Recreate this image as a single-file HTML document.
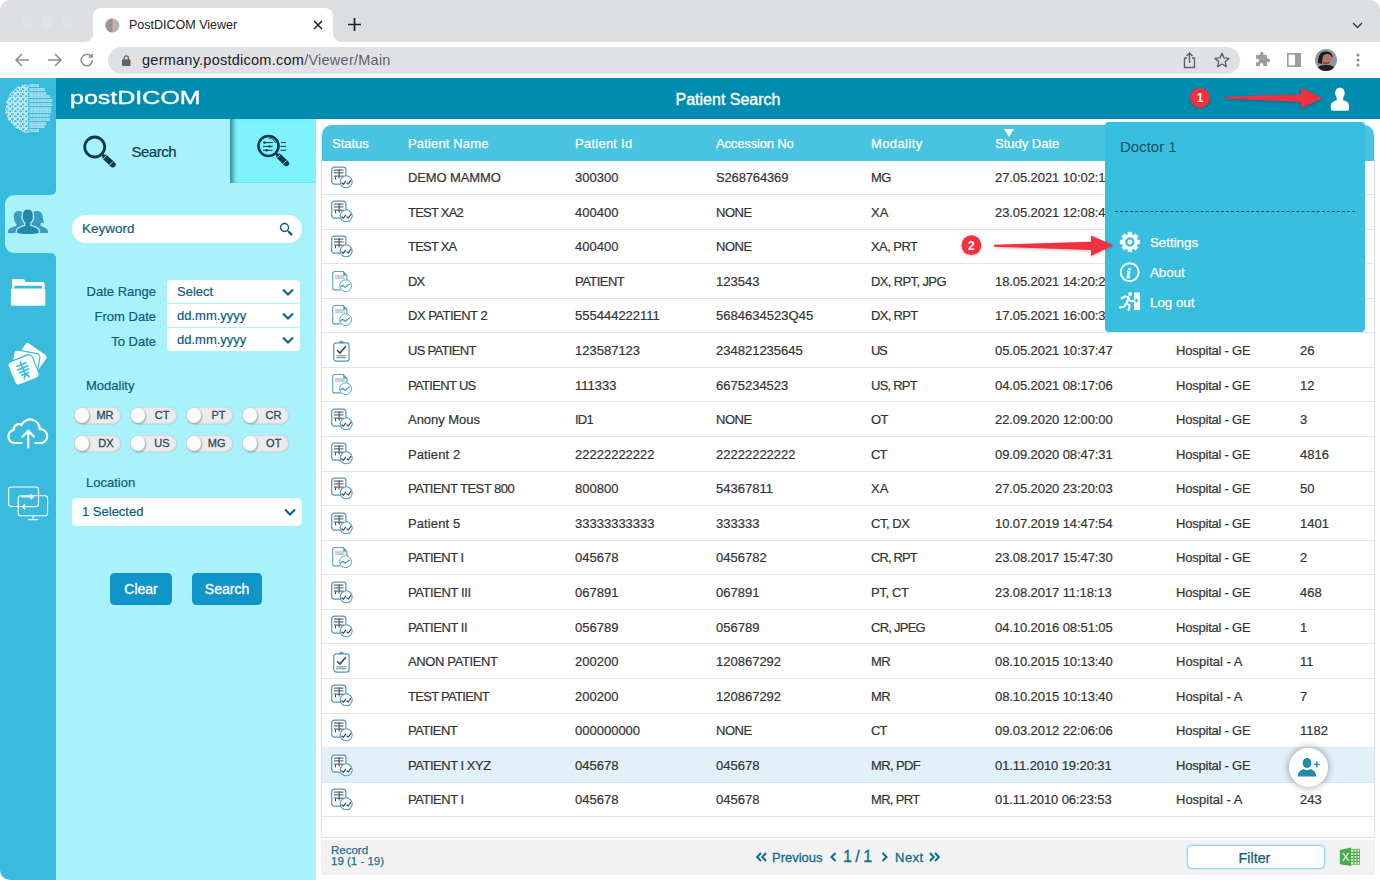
<!DOCTYPE html>
<html lang="en"><head><meta charset="utf-8"><title>PostDICOM Viewer</title>
<style>
*{box-sizing:border-box;margin:0;padding:0}
html,body{width:1380px;height:880px;overflow:hidden;background:#fff;font-family:"Liberation Sans",sans-serif;font-size:13px;color:#333}
.abs{position:absolute}
#win{position:absolute;left:0;top:0;width:1380px;height:880px;border-radius:10px;overflow:hidden;background:#fefefe}
svg{display:block;overflow:visible}
#tabstrip{position:absolute;left:0;top:0;width:1380px;height:42px;background:#dcdee2}
#tab{position:absolute;left:93px;top:8px;width:240px;height:34px;background:#fff;border-radius:8px 8px 0 0}
#tab:before,#tab:after{content:"";position:absolute;bottom:0;width:8px;height:8px}
#tab:before{left:-8px;background:radial-gradient(circle at 0 0,rgba(255,255,255,0) 7.5px,#fff 8px)}
#tab:after{right:-8px;background:radial-gradient(circle at 100% 0,rgba(255,255,255,0) 7.5px,#fff 8px)}
#tab .t{position:absolute;left:36px;top:10px;font-size:12.5px;color:#202124}
#toolbar{position:absolute;left:0;top:42px;width:1380px;height:36px;background:#fff}
#pill{position:absolute;left:108px;top:4.500px;width:1132px;height:27.500px;border-radius:14px;background:#e0e1e4}
#url{position:absolute;left:34px;top:5px;font-size:14.5px;color:#202124;letter-spacing:.25px;white-space:nowrap}
#url i{font-style:normal;color:#5f6368}
#nav{position:absolute;left:0;top:78px;width:56px;height:802px;background:#38bbdc}
#navsel{position:absolute;left:5px;top:195px;width:51px;height:58px;background:#a8f2fc;border-radius:9px 0 0 9px}
#hdr{position:absolute;left:56px;top:78px;width:1324px;height:41px;background:#008cb1}
#brand{position:absolute;left:70px;top:88px;font-size:18px;color:#fff;-webkit-text-stroke:.35px #fff;transform-origin:0 0;transform:scaleX(1.39);white-space:nowrap;line-height:21px}
#title{position:absolute;left:0;top:91px;width:1456px;text-align:center;color:#fff;font-size:16px;-webkit-text-stroke:.35px #fff}
#side{position:absolute;left:56px;top:119px;width:260px;height:761px;background:#a8f2fc}
#adv{position:absolute;left:230px;top:119px;width:86px;height:64px;background:#7ff3fc;box-shadow:inset 6px 0 5px -3px rgba(0,50,80,.6),inset 0 -1px 1px -1px rgba(0,50,80,.3)}
#main{position:absolute;left:316px;top:119px;width:1064px;height:761px;background:#fefefe}
#tbl{position:absolute;left:321px;top:125px;width:1053.500px;height:713px;background:#fff;border:1px solid #dfe3e5;border-radius:10px 10px 0 0;overflow:hidden;box-shadow:0 0 3px rgba(0,0,0,.08)}
#thead{position:absolute;left:322px;top:125px;width:1052px;height:36px;background:#48c3e0;border-radius:10px 10px 0 0;color:#fff;font-size:13px;-webkit-text-stroke:.25px #fff}
#thead span{position:absolute;top:11px;white-space:nowrap}
.row{position:absolute;left:322px;width:1052px;height:34.570px;border-bottom:1px solid #dde6ea;white-space:nowrap}
.row.sel{background:#e1f0f9}
.row span{position:absolute;top:9.700px;line-height:15px;-webkit-text-stroke:.2px #333}
.row .c0{left:8px;top:5.400px}
.ic{width:24px;height:24px;display:block}
.c1{left:86px}.c2{left:253px}.c3{left:394px}.c4{left:549px}.c5{left:673px}.c6{left:854px}.c7{left:978px}
#foot{position:absolute;left:321px;top:840px;width:1053.500px;height:34.600px;background:#f2f2f2}
.lbl{position:absolute;color:#0d5c7d;font-size:13px;white-space:nowrap;-webkit-text-stroke:.2px #0d5c7d}
.sb{position:absolute;background:#fff;color:#0d5c7d;font-size:13px;white-space:nowrap;-webkit-text-stroke:.2px #0d5c7d}
.sb span{position:absolute;left:10px;top:4px}
.sb svg{position:absolute;right:5.800px;top:8px}
.tg{position:absolute;width:46.700px;height:16.500px;border-radius:8.250px;background:#e9ebec;box-shadow:inset 0 0 2px rgba(0,0,0,.28),0 1px 1px rgba(0,0,0,.06);font-size:11px;color:#2f4a5e;-webkit-text-stroke:.3px #2f4a5e;text-align:right;padding-right:7.500px;line-height:17px}
.tg:before{content:"";position:absolute;left:.5px;top:1px;width:14.500px;height:14.500px;border-radius:50%;background:#fafafa;box-shadow:1px 1px 2px rgba(0,0,0,.3)}
.btn{position:absolute;top:573px;height:32px;border-radius:4.500px;background:#1095ca;color:#fff;font-size:14px;text-align:center;line-height:32px;-webkit-text-stroke:.3px #fff}
#dd{position:absolute;left:1105px;top:122px;width:260px;height:210px;background:#38bedf;border-radius:4px}
#dd .it{position:absolute;left:45px;color:#fff;font-size:13.300px;-webkit-text-stroke:.25px #fff}
.pg{position:absolute;color:#0f6a8f;white-space:nowrap;-webkit-text-stroke:.3px #0f6a8f}
.red{fill:#f13040}
</style></head><body>
<svg width="0" height="0" style="position:absolute"><defs>
<symbol id="ica" viewBox="0 0 24 24"><rect x="1.700" y="1.200" width="14.200" height="17" rx="2.600" fill="#fff" stroke="#4f97bf" stroke-width="1.200"/><path d="M3.900 4.100h9.600M3.900 6.900h9.600M3.900 10.100h9.600M9.100 3.200v9.300M5.500 10.500v2.800" stroke="#3a4754" stroke-width="1" fill="none"/><circle cx="16.200" cy="15.800" r="6" fill="#fff" stroke="#4f97bf" stroke-width="1.100"/><path d="M11.500 16.800l2 1.300 2.400-3.200M16.600 16.800l1.700 1.200 2.700-3.900" stroke="#3a4754" stroke-width="1.200" fill="none"/></symbol>
<symbol id="icb" viewBox="0 0 24 24"><path d="M13.200 1.500h-8.500a2 2 0 0 0-2 2v14.400a2 2 0 0 0 2 2h6M13.200 1.500l3.700 3.900v5" fill="#fff" stroke="#5aa3c7" stroke-width="1.100"/><path d="M13.300 1.700l3.500 3.700h-3.500z" fill="#3f9ab5"/><path d="M5.100 6h9.600M5.100 8.100h9.600" stroke="#8a949c" stroke-width=".9" fill="none"/><circle cx="15.600" cy="15.700" r="5.900" fill="#fff" stroke="#5aa3c7" stroke-width="1"/><path d="M10.400 16.900l2.400-1.600 2.250 2 4.750-3.600" stroke="#4f97bf" stroke-width="1.200" fill="none"/></symbol>
<symbol id="icc" viewBox="0 0 24 24"><rect x="3.700" y="3.900" width="15.400" height="18.300" rx="2.600" fill="#fff" stroke="#4f97bf" stroke-width="1.200"/><path d="M9 3.700q2.500-3.300 5 0z" fill="#4f97bf" stroke="#4f97bf" stroke-width=".8"/><path d="M7.100 11.300l2.800 2.800 5.900-6.800" stroke="#3a4754" stroke-width="1.600" fill="none"/><path d="M6.300 16.800h9.900M6.300 18.700h9.900" stroke="#6a747c" stroke-width=".9"/></symbol>
<symbol id="chev" viewBox="0 0 12 8"><path d="M1 1.500l5 5 5-5" fill="none" stroke="#0d5c7d" stroke-width="2"/></symbol>
</defs></svg>
<div id="win">
<!-- ===== browser chrome ===== -->
<div id="tabstrip">
  <div class="abs" style="left:21px;top:15.600px;width:12px;height:12px;border-radius:50%;background:#e1e2e5"></div>
  <div class="abs" style="left:41px;top:15.600px;width:12px;height:12px;border-radius:50%;background:#e1e2e5"></div>
  <div class="abs" style="left:61px;top:15.600px;width:12px;height:12px;border-radius:50%;background:#e1e2e5"></div>
  <div id="tab"><span class="t">PostDICOM Viewer</span>
    <svg class="abs" style="left:12px;top:10px" width="15" height="15" viewBox="0 0 15 15"><circle cx="7.500" cy="7.500" r="7" fill="#b9bcc0"/><path d="M7.500 .5a7 7 0 0 0 0 14z" fill="#8d9297"/><path d="M7.500 1v13M4 3v9M11 3v9M1.500 5h12M1 8h13M2 11h11" stroke="#d98a80" stroke-width=".5" fill="none"/></svg>
    <svg class="abs" style="left:220px;top:12px" width="10" height="10" viewBox="0 0 10 10"><path d="M1 1l8 8M9 1l-8 8" stroke="#202124" stroke-width="1.500"/></svg>
  </div>
  <svg class="abs" style="left:348px;top:18px" width="13" height="13" viewBox="0 0 13 13"><path d="M6.500 0v13M0 6.500h13" stroke="#202124" stroke-width="1.700"/></svg>
  <svg class="abs" style="left:1352.300px;top:22px" width="11" height="7" viewBox="0 0 11 7"><path d="M1 1l4.500 4.500 4.500-4.500" fill="none" stroke="#3c4043" stroke-width="1.500"/></svg>
</div>
<div id="toolbar">
  <svg class="abs" style="left:15px;top:11px" width="15" height="14" viewBox="0 0 15 14"><path d="M14 7h-12.500M7 1l-6 6 6 6" fill="none" stroke="#8a8d91" stroke-width="1.500"/></svg>
  <svg class="abs" style="left:47px;top:11px" width="15" height="14" viewBox="0 0 15 14"><path d="M1 7h12.500M8 1l6 6-6 6" fill="none" stroke="#8a8d91" stroke-width="1.500"/></svg>
  <svg class="abs" style="left:79px;top:10px" width="16" height="16" viewBox="0 0 16 16"><path d="M13.500 8a5.700 5.700 0 1 1-1.700-4" fill="none" stroke="#8a8d91" stroke-width="1.500"/><path d="M13.800 1v4.800h-4.800z" fill="#8a8d91"/></svg>
  <div id="pill">
    <svg class="abs" style="left:14px;top:8.500px" width="8.500" height="11" viewBox="0 0 10 13"><rect x="0" y="5" width="10" height="8" rx="1.200" fill="#5f6368"/><path d="M2.500 5.500v-2a2.500 2.500 0 0 1 5 0v2" fill="none" stroke="#5f6368" stroke-width="1.500"/></svg>
    <span id="url">germany.postdicom.com<i>/Viewer/Main</i></span>
    <svg class="abs" style="left:1075px;top:5px" width="13" height="17" viewBox="0 0 13 17"><path d="M4 6h-2.500v9.500h10v-9.500h-2.500M6.500 11v-9.500M3.500 4l3-3 3 3" fill="none" stroke="#5f6368" stroke-width="1.400"/></svg>
    <svg class="abs" style="left:1106px;top:5px" width="16" height="16" viewBox="0 0 16 16"><path d="M8 1.300l2 4.600 5 .5-3.800 3.300 1.100 4.900-4.300-2.600-4.300 2.600 1.100-4.900-3.800-3.300 5-.5z" fill="none" stroke="#5f6368" stroke-width="1.400" stroke-linejoin="round"/></svg>
  </div>
  <svg class="abs" style="left:1254px;top:10px" width="16" height="16" viewBox="0 0 16 16"><path d="M6 1.500a1.700 1.700 0 0 1 3.400 0v1.500h3.600v3.600h1.300a1.800 1.800 0 0 1 0 3.600h-1.300v3.800h-3.800v-1.300a1.700 1.700 0 0 0-3.400 0v1.300h-3.800v-3.800h1.300a1.700 1.700 0 0 0 0-3.400h-1.300v-3.800h4z" fill="#9a9da2"/></svg>
  <svg class="abs" style="left:1287px;top:11px" width="14" height="14" viewBox="0 0 14 14"><rect x=".8" y=".8" width="12.400" height="12.400" fill="none" stroke="#9a9da1" stroke-width="1.600"/><rect x="8" y=".8" width="5.200" height="12.400" fill="#9a9da1"/></svg>
  <svg class="abs" style="left:1315px;top:7px" width="22" height="22" viewBox="0 0 22 22"><defs><clipPath id="av"><circle cx="11" cy="11" r="11"/></clipPath></defs><g clip-path="url(#av)"><rect width="22" height="22" fill="#8f9aa0"/><ellipse cx="11" cy="10" rx="5.500" ry="6.500" fill="#b07868"/><path d="M3 14c0-10 4-12 9-11.500 4 .3 6 3 5.500 7-.8-2.500-2.500-4.500-5-4.500-3 0-4.500 1-5 4-.3 2-.5 5-.5 6z" fill="#1b1a1c"/><path d="M1 22c1-5 5-6 10-6s9 1 10 6z" fill="#1f1f22"/><path d="M8 13.500c1.500 1 4.500 1 6 0" stroke="#4a2a26" stroke-width="1" fill="none"/></g></svg>
  <svg class="abs" style="left:1355.700px;top:11.300px" width="4" height="14" viewBox="0 0 4 14"><circle cx="2" cy="2" r="1.500" fill="#8a8d91"/><circle cx="2" cy="7" r="1.500" fill="#8a8d91"/><circle cx="2" cy="12" r="1.500" fill="#8a8d91"/></svg>
</div>

<!-- ===== app frame ===== -->
<div id="nav"></div>
<div id="navsel"></div>
<div id="hdr"></div>
<div id="brand">postDICOM</div>
<div id="title">Patient Search</div>
<div id="side"></div>
<div id="adv"></div>
<div id="main"></div>
<!-- logo -->
<svg class="abs" style="left:0;top:0" width="56" height="140" viewBox="0 0 56 140">
<defs><pattern id="dots" x="0.4" y="0.300" width="5.400" height="5" patternUnits="userSpaceOnUse"><circle cx="1.350" cy="1.250" r="1.150" fill="none" stroke="#fff" stroke-width="1.050"/><circle cx="4.050" cy="3.750" r="1.150" fill="none" stroke="#fff" stroke-width="1.050"/></pattern>
<clipPath id="brainL"><path d="M28.500 85c-3-1-6-.5-8 1-3 .5-5 2-6.500 4.500-3 1.500-5 4-5.500 7.500-2 2.500-3 5.500-2.500 9 -1.500 3.500-1 7 1.500 10 .5 3.500 2.500 6 5.500 7.500 1.500 3 4 5 7 5.500 2 2 5 3 8.500 3z"/></clipPath></defs>
<rect x="4" y="83" width="25" height="52" fill="url(#dots)" clip-path="url(#brainL)"/>
<g font-family="Liberation Sans, sans-serif" font-size="3.400" font-weight="bold" fill="#fff">
<text x="29" y="87.20" textLength="10.0" lengthAdjust="spacingAndGlyphs">1010101</text>
<text x="29" y="90.95" textLength="15.7" lengthAdjust="spacingAndGlyphs">10101010101</text>
<text x="29" y="94.70" textLength="16.8" lengthAdjust="spacingAndGlyphs">101010101010</text>
<text x="29" y="98.45" textLength="20.7" lengthAdjust="spacingAndGlyphs">10101010101010</text>
<text x="29" y="102.20" textLength="23.0" lengthAdjust="spacingAndGlyphs">1010101010101010</text>
<text x="29" y="105.95" textLength="23.0" lengthAdjust="spacingAndGlyphs">1010101010101010</text>
<text x="29" y="109.70" textLength="22.0" lengthAdjust="spacingAndGlyphs">101010101010101</text>
<text x="29" y="113.45" textLength="22.0" lengthAdjust="spacingAndGlyphs">101010101010101</text>
<text x="29" y="117.20" textLength="20.7" lengthAdjust="spacingAndGlyphs">10101010101010</text>
<text x="29" y="120.95" textLength="20.7" lengthAdjust="spacingAndGlyphs">10101010101010</text>
<text x="29" y="124.70" textLength="16.8" lengthAdjust="spacingAndGlyphs">101010101010</text>
<text x="29" y="128.45" textLength="15.7" lengthAdjust="spacingAndGlyphs">10101010101</text>
<text x="29" y="132.20" textLength="10.0" lengthAdjust="spacingAndGlyphs">1010101</text>
</g></svg>
<!-- patients (selected) -->
<svg class="abs" style="left:50px;top:189px" width="6" height="70" viewBox="50 189 6 70"><path d="M56 190v5h-5a5 5 0 0 0 5-5zM56 258v-5h-5a5 5 0 0 1 5 5z" fill="#a8f2fc"/></svg>
<svg class="abs" style="left:0;top:200px" width="56" height="44" viewBox="0 200 56 44">
<g fill="#3a9dbd">
<path d="M18.500 210.900c-3 0-4.700 2.300-4.700 5.200 0 1.200.2 1.800.4 2.500-.5.600-.3 1.700.4 2 .3 1.600 1 2.800 1.900 3.600v1.600c-2.800 1-6.600 2-8.100 4-.6.900-.7 2-.7 3.100h17v-18c-1.500-2.500-3.500-4-6.200-4z"/>
<path d="M37 210.900c3.500 0 5.200 2.300 5.700 5.500.3 2.200.6 4.300 1.300 6.100-1 .5-2.300.7-3.400.6v2.700c2.800 1 5.600 2 6.800 4 .6.900.7 2 .7 3.100h-18v-18c1.500-2.500 4-4 6.900-4z"/></g>
<path d="M27.800 208.900c3.500 0 5.600 2.700 5.600 6.200 0 .5 0 1-.1 1.400.7.300.8 1.700-.1 2.300-.4 1.800-1.200 3.200-2.300 4.200v2.300c3 1.100 6.800 1.900 8 4.300.5 1 .5 2.300.5 3.400-3 1.500-8 1.600-11.600 1.600s-8.600-.1-11.600-1.600c0-1.100 0-2.400.5-3.400 1.200-2.400 5-3.200 8-4.300v-2.300c-1.100-1-1.900-2.400-2.300-4.200-.9-.6-.8-2-.1-2.300-.1-.4-.1-.9-.1-1.400 0-3.500 2.100-6.200 5.600-6.200z" fill="#2389ab" stroke="#a8f2fc" stroke-width="1.300"/>
</svg>
<!-- folder / images / cloud / monitors -->
<svg class="abs" style="left:0;top:270px" width="56" height="260" viewBox="0 270 56 260">
<path d="M12 288.600v-7.900q0-1.800 1.800-1.800h9.200q1.300 0 1.700 1.100l.7 1.900h17.500q1.800 0 1.800 1.800v4.900h-2.700v-2.100q0-.8-.8-.8h-26.100q-.8 0-.8.800v2.100z" fill="#fff"/>
<rect x="10.900" y="288.400" width="34.400" height="17.300" rx="1.400" fill="#fff"/>
<g transform="translate(28 364) scale(1.1) translate(-28.400 -364.300)"><g fill="#fff" stroke="#38bbdc" stroke-width="1.100">
<rect x="18.250" y="348.300" width="24" height="24" rx="3.200" transform="rotate(35 30.250 360.300)"/>
<rect x="13.800" y="353.100" width="24" height="24" rx="3.200" transform="rotate(10 25.800 365.100)"/>
<rect x="12.600" y="358.300" width="23.600" height="22.600" rx="3.600" transform="rotate(-22 24.400 369.600)"/></g>
<g transform="rotate(-22 24.400 369.600)" fill="none" stroke="#38bbdc" stroke-width="1.500" stroke-linecap="round"><path d="M24.400 362v12.500M20 364.500h8.800M19.300 367.600h10.200M20 370.700h8.800M21 373.800q1.200-1 3.400 0.700 2.200-1.700 3.400-.7M22 377.300q.4-2 2.400-2.500 2 .5 2.400 2.500" /></g></g>
<g fill="none" stroke="#fff" stroke-width="2.200" stroke-linecap="round" stroke-linejoin="round">
<path d="M21.500 443h-6.500a6.600 6.600 0 0 1-1.200-13.100 5 5 0 0 1 7.700-4.900 9.600 9.600 0 0 1 18.300 4.200 7 7 0 0 1 2 13.800h-6.500"/>
<path d="M28.200 447.500v-16.500M22.700 436.600l5.500-5.900 5.500 5.900"/></g>
<g fill="none" stroke="#fff" stroke-width="1.100">
<rect x="8.700" y="487" width="29.800" height="19.500" rx="2.600"/><rect x="18.200" y="495.800" width="29.400" height="20" rx="2.600"/>
<path d="M33.100 516v3.500M28 519.600h10.200"/><path d="M21 496.800h12M30.500 494.300l2.700 2.500-2.700 2.500M34 506.700h-11.500M25.200 504.200l-2.700 2.500 2.700 2.500" stroke-width="1.300"/></g>
</svg>

<!-- search tabs -->
<svg class="abs" style="left:0;top:0" width="330" height="190" viewBox="0 0 330 190"><g stroke="#10384d" fill="none">
<circle cx="94.700" cy="147" r="10" stroke-width="2.800"/><path d="M101.800 154.100l2.500 2.500" stroke-width="2.400"/><path d="M105.300 157.500l7.600 7.100" stroke-width="5.600" stroke-linecap="round"/>
<circle cx="268.500" cy="146" r="10" stroke-width="2.600"/><path d="M275.500 153l2.500 2.500" stroke-width="2.400"/><path d="M279.200 156.500l7.200 6.900" stroke-width="5.600" stroke-linecap="round"/>
<path d="M263 142.600h9.700M263 146.400h9.700M263 150.300h9.700M281 142.600h5M280.500 146.400h5.500M280.500 150.300h5.500" stroke-width="1"/>
<path d="M268.500 138.200a7.800 7.800 0 0 1 7.200 5" stroke-width=".8"/></g>
<g fill="#10384d"><circle cx="264.700" cy="142.600" r="1.200"/><circle cx="269.500" cy="146.400" r="1.200"/><circle cx="266.600" cy="150.300" r="1.200"/></g>
<path d="M103.200 158.900l3.300-3.400M109.600 165l3.300-3.400" stroke="#a8f2fc" stroke-width=".9"/><path d="M277 157.900l3.300-3.400M283.200 163.900l3.300-3.400" stroke="#7ff3fc" stroke-width=".9"/></svg>
<span class="abs" style="left:131.500px;top:142.500px;font-size:15px;color:#10384d;letter-spacing:-.5px;-webkit-text-stroke:.2px #10384d">Search</span>
<!-- keyword -->
<div class="abs" style="left:72px;top:215px;width:230px;height:28px;border-radius:14px;background:#fff"></div>
<span class="lbl" style="left:82px;top:221px;font-size:13.500px">Keyword</span>
<svg class="abs" style="left:279px;top:222px" width="14" height="14" viewBox="0 0 14 14"><circle cx="5.500" cy="5.500" r="4" fill="none" stroke="#0d5c7d" stroke-width="1.400"/><path d="M8.500 8.500l1 1" stroke="#0d5c7d" stroke-width="1.200"/><path d="M10 10l2.300 2.300" stroke="#0d5c7d" stroke-width="2.400" stroke-linecap="round"/></svg>
<!-- date selects -->
<span class="lbl" style="left:56px;width:100px;text-align:right;top:284px">Date Range</span>
<span class="lbl" style="left:56px;width:100px;text-align:right;top:309px">From Date</span>
<span class="lbl" style="left:56px;width:100px;text-align:right;top:334px">To Date</span>
<div class="sb" style="left:167px;top:280px;width:133px;height:23px;border-radius:4px 4px 0 0"><span>Select</span><svg width="12" height="8"><use href="#chev"/></svg></div>
<div class="sb" style="left:167px;top:304px;width:133px;height:23.400px"><span>dd.mm.yyyy</span><svg width="12" height="8"><use href="#chev"/></svg></div>
<div class="sb" style="left:167px;top:328.300px;width:133px;height:22.700px;border-radius:0 0 4px 4px"><span>dd.mm.yyyy</span><svg width="12" height="8"><use href="#chev"/></svg></div>
<!-- modality -->
<span class="lbl" style="left:86px;top:378px">Modality</span>
<div class="tg" style="left:74.300px;top:407.100px">MR</div><div class="tg" style="left:130.300px;top:407.100px">CT</div><div class="tg" style="left:186.300px;top:407.100px">PT</div><div class="tg" style="left:242.200px;top:407.100px">CR</div>
<div class="tg" style="left:74.300px;top:435.200px">DX</div><div class="tg" style="left:130.300px;top:435.200px">US</div><div class="tg" style="left:186.300px;top:435.200px">MG</div><div class="tg" style="left:242.200px;top:435.200px">OT</div>
<!-- location -->
<span class="lbl" style="left:86px;top:475px">Location</span>
<div class="sb" style="left:72px;top:498px;width:230px;height:27.500px;border-radius:5px"><span style="top:6px">1 Selected</span><svg width="12" height="8" style="top:10px"><use href="#chev"/></svg></div>
<div class="btn" style="left:110px;width:62px">Clear</div>
<div class="btn" style="left:192px;width:70px">Search</div>

<div id="tbl"></div>
<div id="thead"><span style="left:10px">Status</span><span style="left:86px;letter-spacing:.15px">Patient Name</span><span style="left:253px;letter-spacing:.25px">Patient Id</span><span style="left:394px;letter-spacing:-.15px">Accession No</span><span style="left:549px;letter-spacing:.4px">Modality</span><span style="left:673px">Study Date</span>
<svg class="abs" style="left:682px;top:3.500px" width="10" height="8" viewBox="0 0 10 8"><path d="M0 0h10l-5 8z" fill="#fff"/></svg></div>
<div class="row" style="top:160.45px"><span class="c0"><svg class="ic"><use href="#ica"/></svg></span><span class="c1" style="letter-spacing:-0.12px">DEMO MAMMO</span><span class="c2">300300</span><span class="c3" style="letter-spacing:-0.15px">S268764369</span><span class="c4" style="letter-spacing:-0.68px">MG</span><span class="c5" style="letter-spacing:-0.09px">27.05.2021 10:02:17</span><span class="c6" style="letter-spacing:-0.22px">Hospital - GE</span><span class="c7">4</span></div>
<div class="row" style="top:195.02px"><span class="c0"><svg class="ic"><use href="#ica"/></svg></span><span class="c1" style="letter-spacing:-0.76px">TEST XA2</span><span class="c2">400400</span><span class="c3" style="letter-spacing:-0.47px">NONE</span><span class="c4" style="letter-spacing:-0.02px">XA</span><span class="c5" style="letter-spacing:-0.09px">23.05.2021 12:08:41</span><span class="c6" style="letter-spacing:-0.22px">Hospital - GE</span><span class="c7">2</span></div>
<div class="row" style="top:229.59px"><span class="c0"><svg class="ic"><use href="#ica"/></svg></span><span class="c1" style="letter-spacing:-0.78px">TEST XA</span><span class="c2">400400</span><span class="c3" style="letter-spacing:-0.47px">NONE</span><span class="c4" style="letter-spacing:-0.55px">XA, PRT</span><span class="c5"></span><span class="c6" style="letter-spacing:-0.22px">Hospital - GE</span><span class="c7">2</span></div>
<div class="row" style="top:264.16px"><span class="c0"><svg class="ic"><use href="#icb"/></svg></span><span class="c1" style="letter-spacing:-0.83px">DX</span><span class="c2" style="letter-spacing:-0.54px">PATIENT</span><span class="c3">123543</span><span class="c4" style="letter-spacing:-0.62px">DX, RPT, JPG</span><span class="c5" style="letter-spacing:-0.09px">18.05.2021 14:20:22</span><span class="c6" style="letter-spacing:-0.22px">Hospital - GE</span><span class="c7">3</span></div>
<div class="row" style="top:298.73px"><span class="c0"><svg class="ic"><use href="#icb"/></svg></span><span class="c1" style="letter-spacing:-0.51px">DX PATIENT 2</span><span class="c2">555444222111</span><span class="c3" style="letter-spacing:0.03px">5684634523Q45</span><span class="c4" style="letter-spacing:-0.69px">DX, RPT</span><span class="c5" style="letter-spacing:-0.09px">17.05.2021 16:00:35</span><span class="c6" style="letter-spacing:-0.22px">Hospital - GE</span><span class="c7">5</span></div>
<div class="row" style="top:333.30px"><span class="c0"><svg class="ic"><use href="#icc"/></svg></span><span class="c1" style="letter-spacing:-0.70px">US PATIENT</span><span class="c2">123587123</span><span class="c3">234821235645</span><span class="c4" style="letter-spacing:-1.33px">US</span><span class="c5" style="letter-spacing:-0.09px">05.05.2021 10:37:47</span><span class="c6" style="letter-spacing:-0.22px">Hospital - GE</span><span class="c7">26</span></div>
<div class="row" style="top:367.87px"><span class="c0"><svg class="ic"><use href="#icb"/></svg></span><span class="c1" style="letter-spacing:-0.68px">PATIENT US</span><span class="c2">111333</span><span class="c3">6675234523</span><span class="c4" style="letter-spacing:-0.76px">US, RPT</span><span class="c5" style="letter-spacing:-0.09px">04.05.2021 08:17:06</span><span class="c6" style="letter-spacing:-0.22px">Hospital - GE</span><span class="c7">12</span></div>
<div class="row" style="top:402.44px"><span class="c0"><svg class="ic"><use href="#ica"/></svg></span><span class="c1" style="letter-spacing:-0.03px">Anony Mous</span><span class="c2" style="letter-spacing:-0.81px">ID1</span><span class="c3" style="letter-spacing:-0.47px">NONE</span><span class="c4" style="letter-spacing:-0.73px">OT</span><span class="c5" style="letter-spacing:-0.09px">22.09.2020 12:00:00</span><span class="c6" style="letter-spacing:-0.22px">Hospital - GE</span><span class="c7">3</span></div>
<div class="row" style="top:437.01px"><span class="c0"><svg class="ic"><use href="#ica"/></svg></span><span class="c1" style="letter-spacing:0.10px">Patient 2</span><span class="c2">22222222222</span><span class="c3">22222222222</span><span class="c4" style="letter-spacing:-0.97px">CT</span><span class="c5" style="letter-spacing:-0.09px">09.09.2020 08:47:31</span><span class="c6" style="letter-spacing:-0.22px">Hospital - GE</span><span class="c7">4816</span></div>
<div class="row" style="top:471.58px"><span class="c0"><svg class="ic"><use href="#ica"/></svg></span><span class="c1" style="letter-spacing:-0.51px">PATIENT TEST 800</span><span class="c2">800800</span><span class="c3">54367811</span><span class="c4" style="letter-spacing:-0.02px">XA</span><span class="c5" style="letter-spacing:-0.09px">27.05.2020 23:20:03</span><span class="c6" style="letter-spacing:-0.22px">Hospital - GE</span><span class="c7">50</span></div>
<div class="row" style="top:506.15px"><span class="c0"><svg class="ic"><use href="#ica"/></svg></span><span class="c1" style="letter-spacing:0.10px">Patient 5</span><span class="c2">33333333333</span><span class="c3">333333</span><span class="c4" style="letter-spacing:-0.45px">CT, DX</span><span class="c5" style="letter-spacing:-0.09px">10.07.2019 14:47:54</span><span class="c6" style="letter-spacing:-0.22px">Hospital - GE</span><span class="c7">1401</span></div>
<div class="row" style="top:540.72px"><span class="c0"><svg class="ic"><use href="#icb"/></svg></span><span class="c1" style="letter-spacing:-0.47px">PATIENT I</span><span class="c2">045678</span><span class="c3">0456782</span><span class="c4" style="letter-spacing:-0.89px">CR, RPT</span><span class="c5" style="letter-spacing:-0.09px">23.08.2017 15:47:30</span><span class="c6" style="letter-spacing:-0.22px">Hospital - GE</span><span class="c7">2</span></div>
<div class="row" style="top:575.29px"><span class="c0"><svg class="ic"><use href="#ica"/></svg></span><span class="c1" style="letter-spacing:-0.41px">PATIENT III</span><span class="c2">067891</span><span class="c3">067891</span><span class="c4" style="letter-spacing:-0.37px">PT, CT</span><span class="c5" style="letter-spacing:-0.09px">23.08.2017 11:18:13</span><span class="c6" style="letter-spacing:-0.22px">Hospital - GE</span><span class="c7">468</span></div>
<div class="row" style="top:609.86px"><span class="c0"><svg class="ic"><use href="#ica"/></svg></span><span class="c1" style="letter-spacing:-0.44px">PATIENT II</span><span class="c2">056789</span><span class="c3">056789</span><span class="c4" style="letter-spacing:-0.75px">CR, JPEG</span><span class="c5" style="letter-spacing:-0.09px">04.10.2016 08:51:05</span><span class="c6" style="letter-spacing:-0.22px">Hospital - GE</span><span class="c7">1</span></div>
<div class="row" style="top:644.43px"><span class="c0"><svg class="ic"><use href="#icc"/></svg></span><span class="c1" style="letter-spacing:-0.37px">ANON PATIENT</span><span class="c2">200200</span><span class="c3">120867292</span><span class="c4" style="letter-spacing:-0.51px">MR</span><span class="c5" style="letter-spacing:-0.09px">08.10.2015 10:13:40</span><span class="c6">Hospital - A</span><span class="c7">11</span></div>
<div class="row" style="top:679.00px"><span class="c0"><svg class="ic"><use href="#ica"/></svg></span><span class="c1" style="letter-spacing:-0.71px">TEST PATIENT</span><span class="c2">200200</span><span class="c3">120867292</span><span class="c4" style="letter-spacing:-0.51px">MR</span><span class="c5" style="letter-spacing:-0.09px">08.10.2015 10:13:40</span><span class="c6">Hospital - A</span><span class="c7">7</span></div>
<div class="row" style="top:713.57px"><span class="c0"><svg class="ic"><use href="#ica"/></svg></span><span class="c1" style="letter-spacing:-0.54px">PATIENT</span><span class="c2">000000000</span><span class="c3" style="letter-spacing:-0.47px">NONE</span><span class="c4" style="letter-spacing:-0.97px">CT</span><span class="c5" style="letter-spacing:-0.09px">09.03.2012 22:06:06</span><span class="c6" style="letter-spacing:-0.22px">Hospital - GE</span><span class="c7">1182</span></div>
<div class="row sel" style="top:748.14px"><span class="c0"><svg class="ic"><use href="#ica"/></svg></span><span class="c1" style="letter-spacing:-0.47px">PATIENT I XYZ</span><span class="c2">045678</span><span class="c3">045678</span><span class="c4" style="letter-spacing:-0.61px">MR, PDF</span><span class="c5" style="letter-spacing:-0.09px">01.11.2010 19:20:31</span><span class="c6" style="letter-spacing:-0.22px">Hospital - GE</span><span class="c7"></span></div>
<div class="row" style="top:782.71px"><span class="c0"><svg class="ic"><use href="#ica"/></svg></span><span class="c1" style="letter-spacing:-0.47px">PATIENT I</span><span class="c2">045678</span><span class="c3">045678</span><span class="c4" style="letter-spacing:-0.69px">MR, PRT</span><span class="c5" style="letter-spacing:-0.09px">01.11.2010 06:23:53</span><span class="c6">Hospital - A</span><span class="c7">243</span></div>
<div id="foot"></div>
<span class="abs" style="left:331px;top:844.500px;font-size:11.500px;line-height:11.500px;color:#1a6f93;-webkit-text-stroke:.25px #1a6f93">Record<br>19 (1 - 19)</span>
<svg class="abs" style="left:756px;top:852px" width="11" height="10" viewBox="0 0 11 10"><path d="M5 1l-3.800 4 3.800 4M10 1l-3.800 4 3.800 4" fill="none" stroke="#0d6a92" stroke-width="2"/></svg>
<span class="pg" style="left:772px;top:850px;font-size:13px">Previous</span>
<svg class="abs" style="left:830px;top:852px" width="7" height="10" viewBox="0 0 7 10"><path d="M5.500 1l-4 4 4 4" fill="none" stroke="#0d6a92" stroke-width="2"/></svg>
<span class="pg" style="left:843px;top:848px;font-size:16px;word-spacing:-1px">1 / 1</span>
<svg class="abs" style="left:881px;top:852px" width="7" height="10" viewBox="0 0 7 10"><path d="M1.500 1l4 4-4 4" fill="none" stroke="#0d6a92" stroke-width="2"/></svg>
<span class="pg" style="left:895px;top:850px;font-size:13px;letter-spacing:.5px">Next</span>
<svg class="abs" style="left:929px;top:852px" width="11" height="10" viewBox="0 0 11 10"><path d="M1 1l3.800 4-3.800 4M6 1l3.800 4-3.800 4" fill="none" stroke="#0d6a92" stroke-width="2"/></svg>
<div class="abs" style="left:1187px;top:845px;width:138px;height:24px;border:1px solid #8fd6f3;border-radius:5px;background:#fff;color:#0d5c7d;font-size:14.300px;text-align:center;line-height:24px;text-indent:-3px;box-shadow:0 0 1.500px rgba(100,200,240,.9);-webkit-text-stroke:.25px #0d5c7d">Filter</div>
<svg class="abs" style="left:1336px;top:844px" width="28" height="26" viewBox="1336 844 28 26"><rect x="1350.500" y="849.300" width="9" height="15" fill="#eaf6ea" stroke="#4aab4f" stroke-width=".8"/><path d="M1351 852.300h8.500M1351 855.300h8.500M1351 858.300h8.500M1351 861.300h8.500M1354 849.500v14.600M1357 849.500v14.600" stroke="#4aab4f" stroke-width="1.200"/><path d="M1339.800 850l11.300-2.600v18.700l-11.300-1.800z" fill="#4aab4f"/><text x="1345.700" y="861" text-anchor="middle" font-family="Liberation Sans, sans-serif" font-size="11" fill="#fff">X</text></svg>

<!-- floating add-patient button -->
<div class="abs" style="left:1288.600px;top:748.300px;width:39px;height:39px;border-radius:50%;background:#fff;box-shadow:0 0 7px 1px rgba(0,0,0,.3)"></div>
<svg class="abs" style="left:1290px;top:750px" width="36" height="36" viewBox="1290 750 36 36"><g fill="#2389ab"><ellipse cx="1307" cy="763" rx="4.400" ry="4.900"/><path d="M1297.800 776.600c.3-4.500 2.500-6.300 5.700-7.500 2 1.500 5 1.500 7 0 3.200 1.200 5.400 3 5.800 7.500z"/></g><path d="M1313.800 764.400h6M1316.800 761.400v6" stroke="#2389ab" stroke-width="1.400"/></svg>
<!-- user icon -->
<svg class="abs" style="left:1325px;top:82px" width="30" height="34" viewBox="1325 82 30 34"><ellipse cx="1339.900" cy="93.200" rx="4.800" ry="5.800" fill="#fff"/><path d="M1339.900 98.200c4 3.500 9.200 1.500 9.200 8.500v1.500c0 1.600-1 2.600-2.600 2.600h-13.200c-1.600 0-2.600-1-2.600-2.600v-1.500c0-7 5.200-5 9.200-8.500z" fill="#fff"/><rect x="1336.700" y="96" width="6.400" height="5" fill="#fff"/></svg>
<!-- dropdown -->
<div id="dd"><span class="abs" style="left:15px;top:16px;font-size:15px;color:#1f4e5f">Doctor 1</span>
<div class="abs" style="left:10px;top:89px;width:240px;border-top:1px dashed #1f4e5f"></div>
<svg class="abs" style="left:0;top:0" width="260" height="210" viewBox="1105 122 260 210">
<path d="M1127.87 234.68 L1127.91 232.20 L1131.89 232.20 L1131.93 234.68 L1133.65 235.39 L1135.43 233.67 L1138.23 236.47 L1136.51 238.25 L1137.22 239.97 L1139.70 240.01 L1139.70 243.99 L1137.22 244.03 L1136.51 245.75 L1138.23 247.53 L1135.43 250.33 L1133.65 248.61 L1131.93 249.32 L1131.89 251.80 L1127.91 251.80 L1127.87 249.32 L1126.15 248.61 L1124.37 250.33 L1121.57 247.53 L1123.29 245.75 L1122.58 244.03 L1120.10 243.99 L1120.10 240.01 L1122.58 239.97 L1123.29 238.25 L1121.57 236.47 L1124.37 233.67 L1126.15 235.39Z" fill="#fff" stroke="#fff" stroke-width=".4" stroke-linejoin="round"/><circle cx="1129.9" cy="242.0" r="7.500" fill="#fff"/><circle cx="1129.9" cy="242.0" r="3.600" fill="none" stroke="#38bedf" stroke-width="2.300"/>
<circle cx="1129.700" cy="272.200" r="9" fill="none" stroke="#fff" stroke-width="1.900"/><text x="1126.300" y="277.800" font-family="Liberation Serif, serif" font-style="italic" font-weight="bold" font-size="15.500" fill="#fff" stroke="#fff" stroke-width=".4">i</text>
<rect x="1134" y="292.500" width="6" height="17.600" fill="#fff"/><path d="M1132 300.600h5.500M1135.800 298.600l2 2-2 2" fill="none" stroke="#38bedf" stroke-width="1.200"/>
<circle cx="1130" cy="294" r="1.900" fill="#fff"/>
<path d="M1121.500 298.300l3.300-1.800 3.900 .8-2.300 6 3.300 2.200-1.200 4.700M1126 303.500l-1.800 3.300-4 .6M1128.300 298.300l1.700 2.500 3 .3" fill="none" stroke="#fff" stroke-width="2.100" stroke-linecap="round" stroke-linejoin="round"/>
</svg>
<span class="it" style="top:113px">Settings</span><span class="it" style="top:143px">About</span><span class="it" style="top:173px">Log out</span></div>
<!-- annotations -->
<svg class="abs" style="left:0;top:0" width="1380" height="880" viewBox="0 0 1380 880">
<g style="filter:drop-shadow(0 1px 1.500px rgba(0,0,0,.25))">
<circle cx="1200" cy="97.700" r="10" class="red"/>
<path d="M1226.100 96.400l74.800-1.900v-6.900l21.600 10.600-21.600 10.400v-6.500l-74.800-3.700z" class="red"/>
<circle cx="971.400" cy="245.200" r="9.900" class="red"/>
<path d="M994.200 244.700l96.800-3v-6.100l22.500 9.600-22.500 10.700v-5.900l-96.800-3.300z" class="red"/></g>
<text x="1200" y="102" text-anchor="middle" font-family="Liberation Sans, sans-serif" font-weight="bold" font-size="12" fill="#fff">1</text>
<text x="971.400" y="249.600" text-anchor="middle" font-family="Liberation Sans, sans-serif" font-weight="bold" font-size="12" fill="#fff">2</text>
</svg>

</div>
</body></html>
